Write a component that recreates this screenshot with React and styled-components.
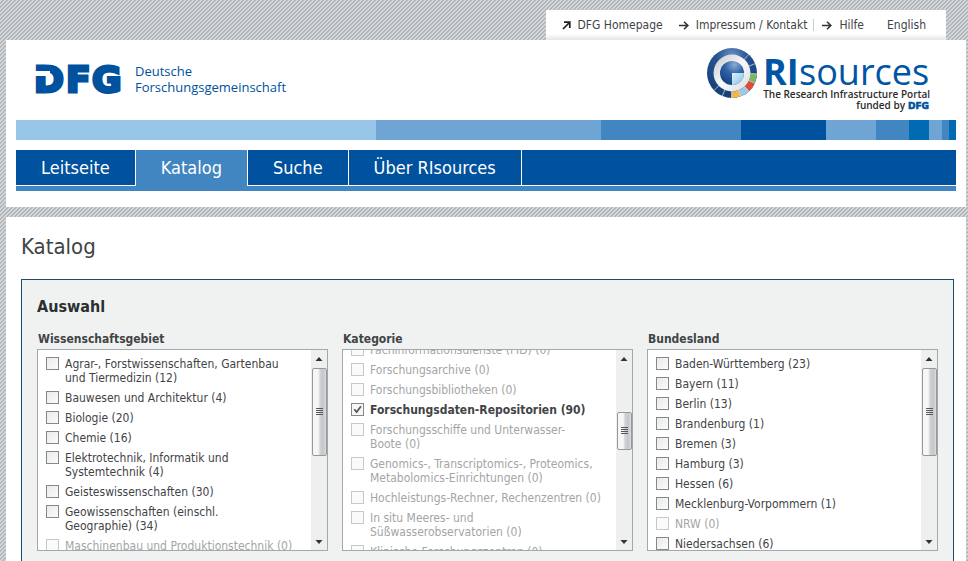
import React, { useId, useLayoutEffect, useRef, useState } from "react";
import styled, { createGlobalStyle, css } from "styled-components";

const blue = "#00519e";
const midBlue = "#4185c1";

const GlobalStyle = createGlobalStyle`
  *, *::before, *::after { box-sizing: border-box; }
  body {
    margin: 0;
    color: #3f4446;
    font: 12px/14px "DejaVu Sans Condensed", Tahoma, sans-serif;
    background: linear-gradient(135deg, #d3d7d9 25%, #b2b7bb 25% 50%, #d3d7d9 50% 75%, #b2b7bb 75%) 0 0 / 4px 4px;
  }
`;

const Page = styled.div`
  display: flex;
  flex-direction: column;
  padding: 10px 2px 0 6px;
`;

const MetaNav = styled.nav`
  display: flex;
  align-items: center;
  align-self: flex-end;
  height: 30px;
  margin-right: 20px;
  padding: 0 20px 0 16px;
  background: linear-gradient(#fff 80%, #e4e6e6);
`;

const MetaLink = styled.a`
  display: flex;
  align-items: center;
  gap: 7px;
  margin-left: ${(p) => p.$gap || 0}px;
  color: #3f4446;
  text-decoration: none;
  white-space: nowrap;
`;

const MetaDivider = styled.span`
  width: 1px;
  height: 12px;
  margin: 0 8px 0 6px;
  background: #c3cfcb;
`;

const Header = styled.header`
  padding: 0 10px 16px;
  background: #fff;
`;

const BrandRow = styled.div`
  display: flex;
  justify-content: space-between;
  align-items: flex-start;
  height: 80px;
  padding: 8px 27px 0 20px;
`;

const DfgBrand = styled.a`
  display: flex;
  gap: 12px;
  margin-top: 15px;
  color: ${blue};
  font: 13px/16px "Open Sans", sans-serif;
  text-decoration: none;
`;

const LogoDrawing = styled.svg`
  flex: none;
  overflow: visible;
`;

const Band = styled.div`
  display: flex;
  height: 20px;
`;

const BandPart = styled.span`
  flex: ${(p) => p.$share} 0 0;
  background: ${(p) => p.$color};
`;

const MainNav = styled.nav`
  display: flex;
  margin-top: 10px;
  border-bottom: 5px solid ${midBlue};
  background: linear-gradient(${blue} 35px, #fff 35px);
`;

const NavLink = styled.a`
  height: 36px;
  padding: 0 25px;
  border-right: 1px solid #fff;
  color: #fff;
  font-size: 18px;
  line-height: 35px;
  text-decoration: none;
  ${(p) => p.$active && css`background: ${midBlue};`}
`;

const Main = styled.main`
  margin-top: 10px;
  padding: 16px 12px 16px 15px;
  background: #fff;
`;

const PageTitle = styled.h1`
  margin: 0 0 18px;
  font-size: 22px;
  font-weight: 400;
  line-height: 28px;
`;

const Panel = styled.section`
  padding: 15px 15px 16px;
  border: 1px solid #1c4d70;
  background: #f0f2f2;
`;

const PanelTitle = styled.h2`
  margin: 0 0 12px;
  color: #2b2f31;
  font-size: 16px;
  line-height: 24px;
`;

const Columns = styled.div`
  display: grid;
  grid-template-columns: repeat(3, minmax(0, 1fr));
  gap: 14px;
`;

const Group = styled.fieldset`
  min-width: 0;
  margin: 0;
  padding: 0;
  border: 0;
`;

const GroupTitle = styled.legend`
  padding: 0 1px;
  margin-bottom: 2px;
  font-weight: 700;
  line-height: 16px;
`;

const ListBox = styled.div`
  display: flex;
  height: 202px;
  border: 1px solid #a3a8aa;
  background: #fff;
`;

const OptionList = styled.ul`
  flex: 1;
  display: flex;
  flex-direction: column;
  gap: 6px;
  margin: 0;
  padding: 7px 10px 7px 8px;
  overflow-y: auto;
  scrollbar-width: none;
  list-style: none;
`;

const Option = styled.li`
  display: flex;
  align-items: flex-start;
  gap: 6px;
  color: ${(p) => (p.$off ? "#a3a5a6" : "inherit")};
  font-weight: ${(p) => (p.$bold ? 700 : 400)};
`;

const checkMark = encodeURIComponent(
  '<svg xmlns="http://www.w3.org/2000/svg" viewBox="0 0 11 11"><path d="M2.3 5.2 4.6 8 9 2.2" fill="none" stroke="#55595c" stroke-width="1.8"/></svg>'
);

const CheckBox = styled.input`
  flex: none;
  appearance: none;
  width: 13px;
  height: 13px;
  margin: 0;
  border: 1px solid #85888a;
  background: linear-gradient(135deg, #e9eaeb, #fbfbfb);
  &:checked { background: url("data:image/svg+xml,${checkMark}") center / 11px 11px #f6f6f6; }
  &:disabled { border-color: #c6c8c9; background: #fafafa; }
`;

const ScrollBar = styled.div`
  display: flex;
  flex-direction: column;
  flex: none;
  align-items: center;
  width: 16px;
  background: #efefef;
`;

const ScrollArrow = styled.svg`
  flex: none;
  width: 16px;
  height: 18px;
`;

const Track = styled.div`
  flex: 1;
  width: 15px;
  padding-top: ${(p) => p.$before}px;
`;

const Thumb = styled.div`
  display: flex;
  align-items: center;
  justify-content: center;
  height: ${(p) => p.$size}px;
  border: 1px solid #96999c;
  border-radius: 2px;
  background: linear-gradient(90deg, #f6f6f6 40%, #d0d1d4 55%, #c6c7cb 80%, #dcdde0);
`;

const linkList = [
  { label: "DFG Homepage", icon: "out" },
  { label: "Impressum / Kontakt", icon: "right", gap: 16 },
  { label: "Hilfe", icon: "right", divided: true },
  { label: "English", gap: 23 },
];

const band = [
  [360, "#97c6e8"], [225, "#6fa5d5"], [140, midBlue], [85, blue], [50, "#6fa5d5"],
  [33, midBlue], [20, "#006ab3"], [13, "#6fa5d5"], [7, midBlue], [7, "#006ab3"],
];

const pages = ["Leitseite", "Katalog", "Suche", "Über RIsources"];

const groups = [
  {
    title: "Wissenschaftsgebiet",
    thumb: [0, 88],
    options: [
      ["Agrar-, Forstwissenschaften, Gartenbau und Tiermedizin", 12],
      ["Bauwesen und Architektur", 4],
      ["Biologie", 20],
      ["Chemie", 16],
      ["Elektrotechnik, Informatik und Systemtechnik", 4],
      ["Geisteswissenschaften", 30],
      ["Geowissenschaften (einschl. Geographie)", 34],
      ["Maschinenbau und Produktionstechnik", 0],
    ],
  },
  {
    title: "Kategorie",
    thumb: [44, 38],
    scroll: 14,
    selected: "Forschungsdaten-Repositorien",
    options: [
      ["Fachinformationsdienste (FID)", 0],
      ["Forschungsarchive", 0],
      ["Forschungsbibliotheken", 0],
      ["Forschungsdaten-Repositorien", 90],
      ["Forschungsschiffe und Unterwasser-Boote", 0],
      ["Genomics-, Transcriptomics-, Proteomics, Metabolomics-Einrichtungen", 0],
      ["Hochleistungs-Rechner, Rechenzentren", 0],
      ["In situ Meeres- und Süßwasserobservatorien", 0],
      ["Klinische Forschungszentren", 0],
    ],
  },
  {
    title: "Bundesland",
    thumb: [0, 88],
    options: [
      ["Baden-Württemberg", 23], ["Bayern", 11], ["Berlin", 13], ["Brandenburg", 1],
      ["Bremen", 3], ["Hamburg", 3], ["Hessen", 6], ["Mecklenburg-Vorpommern", 1],
      ["NRW", 0], ["Niedersachsen", 6],
    ],
  },
];

function LinkArrow({ kind }) {
  return kind === "out" ? (
    <svg width="9" height="9" viewBox="0 0 9 9" fill="none" stroke="#222" strokeWidth="1.7" aria-hidden="true">
      <path d="M1 8 7.5 1.5M2 1.2h5.8V7" />
    </svg>
  ) : (
    <svg width="10" height="9" viewBox="0 0 10 9" fill="none" stroke="#333" strokeWidth="1.6" aria-hidden="true">
      <path d="M0 4.5h8.5M5 .8l3.8 3.7L5 8.2" />
    </svg>
  );
}

function DfgMark() {
  return (
    <LogoDrawing width="87" height="32" viewBox="0 0 87 32" role="img" aria-label="DFG">
      <text y="29" fill={blue} stroke={blue} strokeWidth="3" fontFamily="DejaVu Sans" fontWeight="700" fontSize="36">
        <tspan x="-2">D</tspan><tspan x="30">F</tspan><tspan x="56">G</tspan>
      </text>
      <path d="M-1 8h15v5H-1z" fill="#fff" />
    </LogoDrawing>
  );
}

const point = (radius, degrees) => {
  const a = (degrees * Math.PI) / 180;
  return `${(25 + radius * Math.cos(a)).toFixed(2)} ${(25 + radius * Math.sin(a)).toFixed(2)}`;
};

const ringPart = (from, to) =>
  `M${point(25, from)}A25 25 0 0 1 ${point(25, to)}L${point(18.5, to)}A18.5 18.5 0 0 0 ${point(18.5, from)}Z`;

const ringColors = [
  [2, 24, "#7db661"], [24, 47, "#dc4f36"], [47, 69, "#9ccbe8"], [69, 91, "#f3b84a"],
];

function PortalLogo() {
  const id = useId();
  return (
    <LogoDrawing width="222" height="66" viewBox="0 0 222 66" role="img" aria-label="RIsources">
      <defs>
        <radialGradient id={`${id}ring`} cx=".5" cy=".15" r=".8">
          <stop offset="0" stopColor="#6b8fc4" /><stop offset=".4" stopColor="#24518f" /><stop offset="1" stopColor="#173f78" />
        </radialGradient>
        <linearGradient id={`${id}silver`} x2="1" y2="1">
          <stop offset="0" stopColor="#c3c6ca" /><stop offset=".5" stopColor="#f8f8f8" /><stop offset="1" stopColor="#d9dcdf" />
        </linearGradient>
        <radialGradient id={`${id}core`} cx=".6" cy=".15" r=".8">
          <stop offset="0" stopColor="#8fabd6" /><stop offset=".5" stopColor="#2f62a8" /><stop offset="1" stopColor="#184683" />
        </radialGradient>
        <linearGradient id={`${id}slice`} x2="1" y2="1">
          <stop offset="0" stopColor="#e0f1fb" /><stop offset="1" stopColor="#7dbde8" />
        </linearGradient>
      </defs>
      <circle cx="25" cy="25" r="25" fill={`url(#${id}ring)`} />
      {ringColors.map(([a, b, color]) => <path key={a} d={ringPart(a, b)} fill={color} />)}
      {[-48, -22, 2, 24, 47, 69, 91, 113, 136].map((a) => (
        <path key={a} d={`M${point(18, a)}L${point(25, a)}`} stroke="#dfe8f2" strokeWidth=".7" />
      ))}
      <circle cx="25" cy="25" r="18.5" fill={`url(#${id}silver)`} />
      <circle cx="25" cy="25" r="12" fill={`url(#${id}core)`} />
      <path d="M25 25h12a12 12 0 0 1-12 12z" fill={`url(#${id}slice)`} />
      <g fontFamily="Open Sans, sans-serif">
        <text y="37" fontSize="36" fill="#0056a4"><tspan x="56" fontWeight="700">RI</tspan><tspan x="92">sources</tspan></text>
        <g fill="#2b2b2b" fontWeight="600">
          <text x="223" y="50" fontSize="10" textAnchor="end">The Research Infrastructure Portal</text>
          <text x="198" y="61" fontSize="10" textAnchor="end">funded by</text>
        </g>
      </g>
      <text x="201" y="61" fontFamily="DejaVu Sans" fontWeight="700" fontSize="9" fill={blue} stroke={blue} strokeWidth=".6">DFG</text>
    </LogoDrawing>
  );
}

function FilterGroup({ title, options, selected, scroll = 0, thumb }) {
  const listRef = useRef(null);
  const [picked, setPicked] = useState(selected ? [selected] : []);
  useLayoutEffect(() => { listRef.current.scrollTop = scroll; }, [scroll]);
  const toggle = (name) =>
    setPicked((now) => (now.includes(name) ? now.filter((n) => n !== name) : [...now, name]));

  return (
    <Group>
      <GroupTitle>{title}</GroupTitle>
      <ListBox>
        <OptionList ref={listRef}>
          {options.map(([name, count], i) => {
            const id = `${title}-${i}`;
            return (
              <Option key={name} $off={count === 0} $bold={picked.includes(name)}>
                <CheckBox id={id} type="checkbox" disabled={count === 0} checked={picked.includes(name)} onChange={() => toggle(name)} />
                <label htmlFor={id}>{`${name}\u00a0(${count})`}</label>
              </Option>
            );
          })}
        </OptionList>
        <ScrollBar aria-hidden="true">
          <ScrollArrow viewBox="0 0 16 18"><path d="M4.5 11 8 7l3.5 4z" fill="#333" /></ScrollArrow>
          <Track $before={thumb[0]}>
            <Thumb $size={thumb[1]}>
              <svg width="7" height="8" viewBox="0 0 7 8"><path d="M0 .5h7M0 2.5h7M0 4.5h7M0 6.5h7" stroke="#55585b" /></svg>
            </Thumb>
          </Track>
          <ScrollArrow viewBox="0 0 16 18"><path d="M4.5 8 8 12l3.5-4z" fill="#333" /></ScrollArrow>
        </ScrollBar>
      </ListBox>
    </Group>
  );
}

export default function App() {
  return (
    <>
      <GlobalStyle />
      <Page>
        <MetaNav aria-label="Service">
          {linkList.map(({ label, icon, gap, divided }) => (
            <React.Fragment key={label}>
              {divided && <MetaDivider />}
              <MetaLink href="#" $gap={gap}>{icon && <LinkArrow kind={icon} />}{label}</MetaLink>
            </React.Fragment>
          ))}
        </MetaNav>
        <Header>
          <BrandRow>
            <DfgBrand href="#">
              <DfgMark />
              <span>Deutsche<br />Forschungsgemeinschaft</span>
            </DfgBrand>
            <PortalLogo />
          </BrandRow>
          <Band>{band.map(([share, color], i) => <BandPart key={i} $share={share} $color={color} />)}</Band>
          <MainNav aria-label="Hauptnavigation">
            {pages.map((name) => <NavLink key={name} href="#" $active={name === "Katalog"}>{name}</NavLink>)}
          </MainNav>
        </Header>
        <Main>
          <PageTitle>Katalog</PageTitle>
          <Panel>
            <PanelTitle>Auswahl</PanelTitle>
            <Columns>{groups.map((g) => <FilterGroup key={g.title} {...g} />)}</Columns>
          </Panel>
        </Main>
      </Page>
    </>
  );
}
